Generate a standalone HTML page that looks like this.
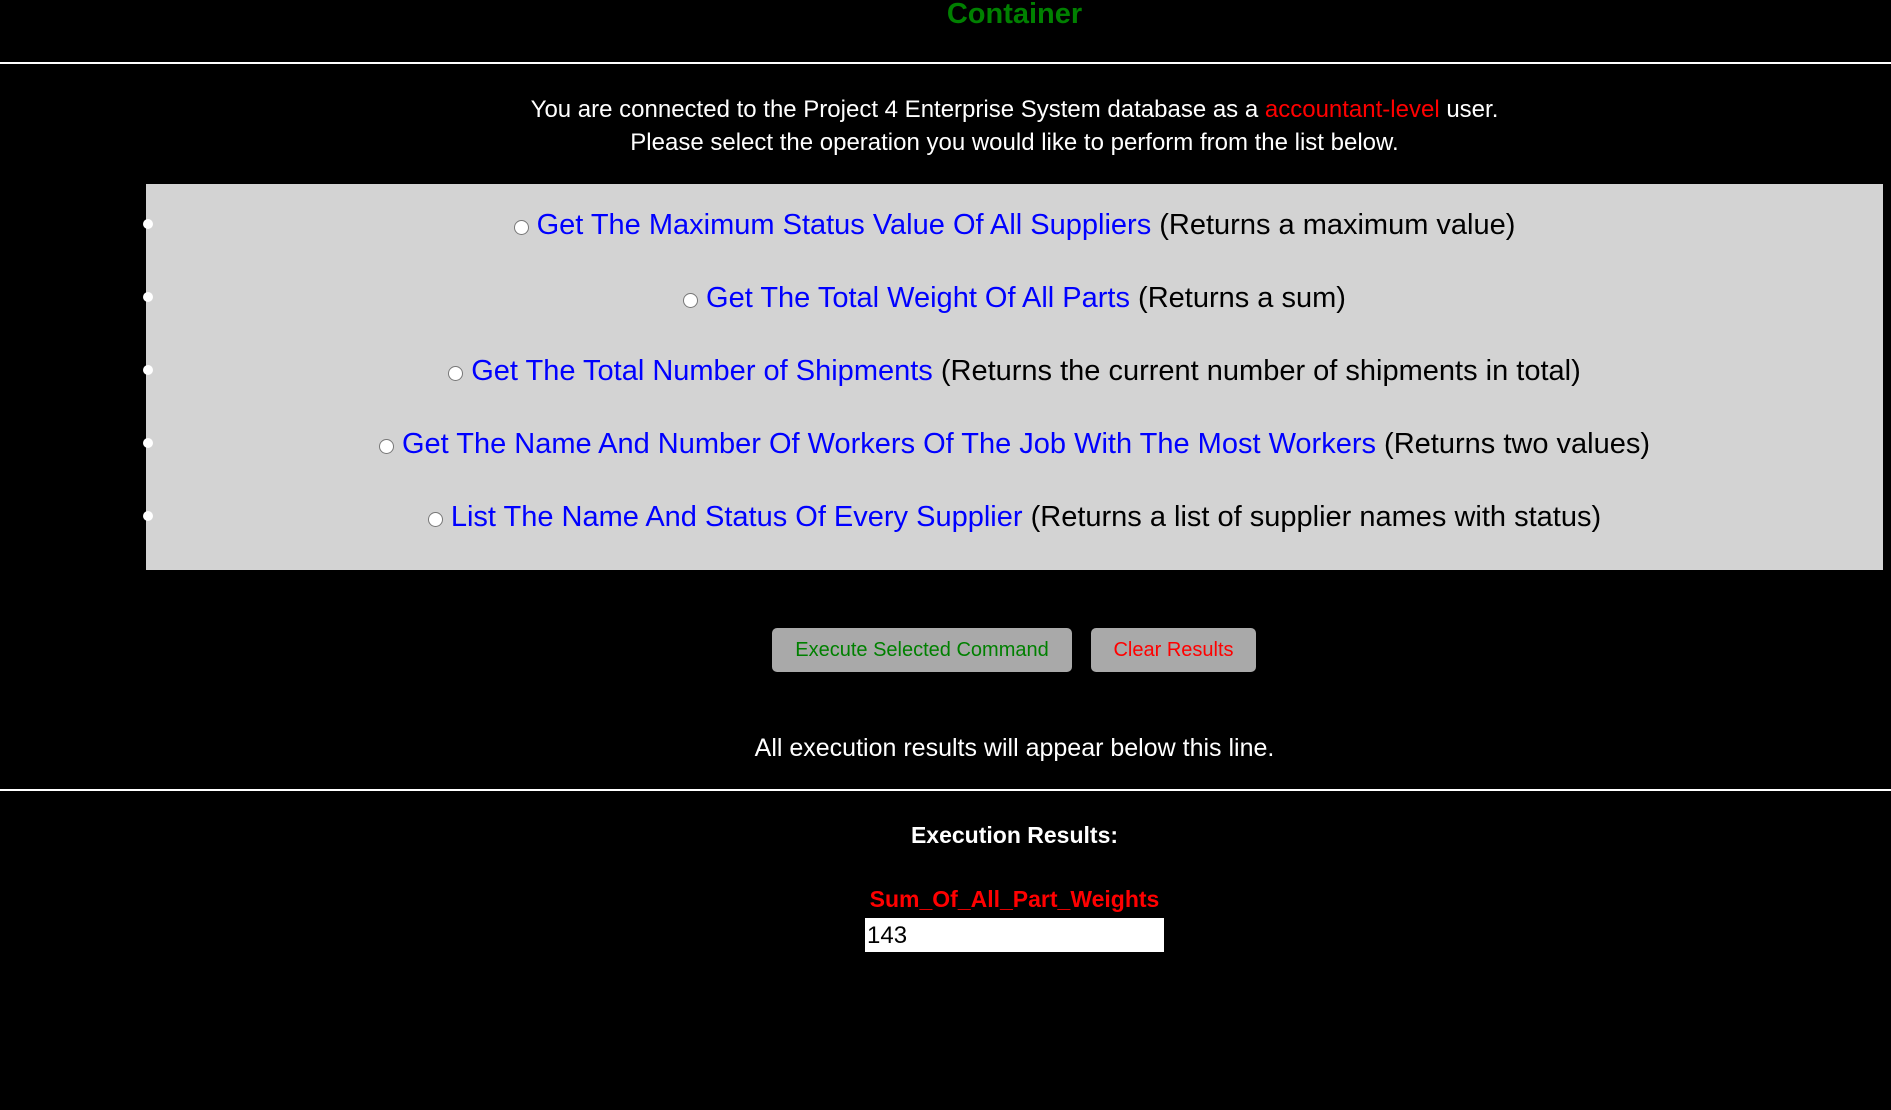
<!DOCTYPE html>
<html><head><meta charset="utf-8"><style>
html,body{margin:0;padding:0;background:#000;width:1891px;height:1110px;overflow:hidden;position:relative;font-family:"Liberation Sans",Arial,sans-serif}
.a{position:absolute;white-space:nowrap}
.c{left:146px;width:1737px;text-align:center}
.hr{position:absolute;left:0;width:1891px;height:2px;background:#fff}
.box{position:absolute;left:146px;top:184px;width:1737px;height:386px;background:#d3d3d3}
.row{position:absolute;left:146px;width:1737px;text-align:center;font-size:29px;color:#000;line-height:34px}
.row a{color:#0000ff;text-decoration:none}
.rd{display:inline-block;width:13px;height:13px;border:1px solid #777;border-radius:50%;background:#fff;margin-right:8px;vertical-align:-1px}
.bul{position:absolute;left:143px;width:10px;height:10px;border-radius:50%;background:#fff}
.btn{position:absolute;top:628px;height:44px;background:#a9a9a9;border-radius:5px;font-size:20px;line-height:44px;text-align:center}
</style></head><body>
<div class="a c" style="top:-3px;font-size:29px;font-weight:bold;color:#008000;line-height:34px">Container</div>
<div class="hr" style="top:62px"></div>
<div class="a c" style="top:95px;font-size:24px;color:#fff;line-height:30px">You are connected to the Project 4 Enterprise System database as a <span style="color:#ff0000">accountant-level</span> user.</div>
<div class="a c" style="top:128px;font-size:24px;color:#fff;line-height:30px">Please select the operation you would like to perform from the list below.</div>
<div class="box"></div>
<div class="bul" style="top:219px"></div>
<div class="bul" style="top:292px"></div>
<div class="bul" style="top:365px"></div>
<div class="bul" style="top:438px"></div>
<div class="bul" style="top:511px"></div>
<div class="row" style="top:208px"><span class="rd"></span><a>Get The Maximum Status Value Of All Suppliers</a> (Returns a maximum value)</div>
<div class="row" style="top:281px"><span class="rd"></span><a>Get The Total Weight Of All Parts</a> (Returns a sum)</div>
<div class="row" style="top:354px"><span class="rd"></span><a>Get The Total Number of Shipments</a> (Returns the current number of shipments in total)</div>
<div class="row" style="top:427px"><span class="rd"></span><a>Get The Name And Number Of Workers Of The Job With The Most Workers</a> (Returns two values)</div>
<div class="row" style="top:500px"><span class="rd"></span><a>List The Name And Status Of Every Supplier</a> (Returns a list of supplier names with status)</div>
<div class="btn" style="left:772px;width:300px;color:#008000">Execute Selected Command</div>
<div class="btn" style="left:1091px;width:165px;color:#ff0000">Clear Results</div>
<div class="a c" style="top:733px;font-size:25px;color:#fff;line-height:30px">All execution results will appear below this line.</div>
<div class="hr" style="top:789px"></div>
<div class="a c" style="top:820px;font-size:23px;font-weight:bold;color:#fff;line-height:30px">Execution Results:</div>
<div class="a c" style="top:884px;font-size:23px;font-weight:bold;color:#ff0000;line-height:30px">Sum_Of_All_Part_Weights</div>
<div class="a" style="left:865px;top:918px;width:299px;height:34px;background:#fff;font-size:24px;line-height:35px;color:#000;padding-left:2px;box-sizing:border-box">143</div>
</body></html>
